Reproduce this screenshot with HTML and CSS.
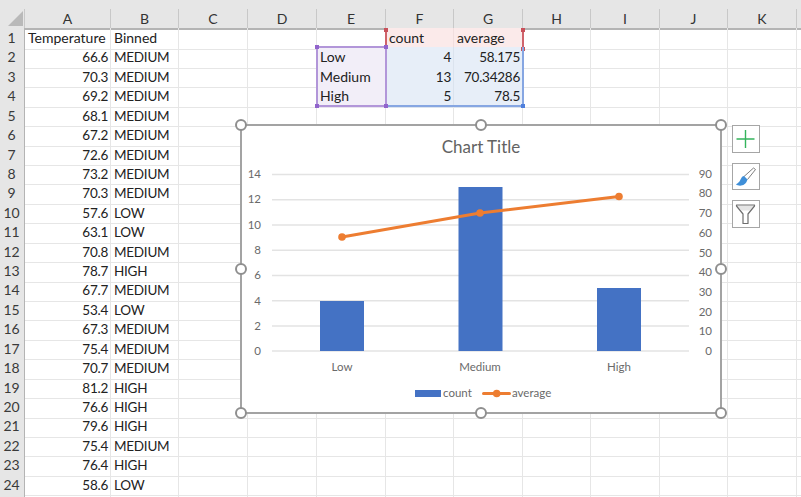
FILE: index.html
```html
<!DOCTYPE html>
<html lang="en">
<head>
<meta charset="utf-8">
<title>Binned temperature chart</title>
<link rel="stylesheet" href="styles.css">
</head>
<body>
<div class="sheet">
  <div class="topband"></div>
  <div class="row head"><div class="corner"><svg class="tri" width="25" height="19" viewBox="0 0 25 19"><path d="M8 17 L23 17 L23 2 Z"/></svg></div><b>A</b><b>B</b><b>C</b><b>D</b><b>E</b><b>F</b><b>G</b><b>H</b><b>I</b><b>J</b><b>K</b><b></b></div>
  <div class="row"><u>1</u><span class="txt">Temperature</span><span class="txt">Binned</span><i></i><i></i><i></i><span class="txt red">count</span><span class="txt red">average</span><i></i><i></i><i></i><i></i><i></i></div>
  <div class="row"><u>2</u><span class="num">66.6</span><span class="cap">MEDIUM</span><i></i><i></i><span class="txt pur">Low</span><span class="num blu">4</span><span class="num blu">58.175</span><i></i><i></i><i></i><i></i><i></i></div>
  <div class="row"><u>3</u><span class="num">70.3</span><span class="cap">MEDIUM</span><i></i><i></i><span class="txt pur">Medium</span><span class="num blu">13</span><span class="num blu">70.34286</span><i></i><i></i><i></i><i></i><i></i></div>
  <div class="row"><u>4</u><span class="num">69.2</span><span class="cap">MEDIUM</span><i></i><i></i><span class="txt pur">High</span><span class="num blu">5</span><span class="num blu">78.5</span><i></i><i></i><i></i><i></i><i></i></div>
  <div class="row"><u>5</u><span class="num">68.1</span><span class="cap">MEDIUM</span><i></i><i></i><i></i><i></i><i></i><i></i><i></i><i></i><i></i><i></i></div>
  <div class="row"><u>6</u><span class="num">67.2</span><span class="cap">MEDIUM</span><i></i><i></i><i></i><i></i><i></i><i></i><i></i><i></i><i></i><i></i></div>
  <div class="row"><u>7</u><span class="num">72.6</span><span class="cap">MEDIUM</span><i></i><i></i><i></i><i></i><i></i><i></i><i></i><i></i><i></i><i></i></div>
  <div class="row"><u>8</u><span class="num">73.2</span><span class="cap">MEDIUM</span><i></i><i></i><i></i><i></i><i></i><i></i><i></i><i></i><i></i><i></i></div>
  <div class="row"><u>9</u><span class="num">70.3</span><span class="cap">MEDIUM</span><i></i><i></i><i></i><i></i><i></i><i></i><i></i><i></i><i></i><i></i></div>
  <div class="row"><u>10</u><span class="num">57.6</span><span class="cap">LOW</span><i></i><i></i><i></i><i></i><i></i><i></i><i></i><i></i><i></i><i></i></div>
  <div class="row"><u>11</u><span class="num">63.1</span><span class="cap">LOW</span><i></i><i></i><i></i><i></i><i></i><i></i><i></i><i></i><i></i><i></i></div>
  <div class="row"><u>12</u><span class="num">70.8</span><span class="cap">MEDIUM</span><i></i><i></i><i></i><i></i><i></i><i></i><i></i><i></i><i></i><i></i></div>
  <div class="row"><u>13</u><span class="num">78.7</span><span class="cap">HIGH</span><i></i><i></i><i></i><i></i><i></i><i></i><i></i><i></i><i></i><i></i></div>
  <div class="row"><u>14</u><span class="num">67.7</span><span class="cap">MEDIUM</span><i></i><i></i><i></i><i></i><i></i><i></i><i></i><i></i><i></i><i></i></div>
  <div class="row"><u>15</u><span class="num">53.4</span><span class="cap">LOW</span><i></i><i></i><i></i><i></i><i></i><i></i><i></i><i></i><i></i><i></i></div>
  <div class="row"><u>16</u><span class="num">67.3</span><span class="cap">MEDIUM</span><i></i><i></i><i></i><i></i><i></i><i></i><i></i><i></i><i></i><i></i></div>
  <div class="row"><u>17</u><span class="num">75.4</span><span class="cap">MEDIUM</span><i></i><i></i><i></i><i></i><i></i><i></i><i></i><i></i><i></i><i></i></div>
  <div class="row"><u>18</u><span class="num">70.7</span><span class="cap">MEDIUM</span><i></i><i></i><i></i><i></i><i></i><i></i><i></i><i></i><i></i><i></i></div>
  <div class="row"><u>19</u><span class="num">81.2</span><span class="cap">HIGH</span><i></i><i></i><i></i><i></i><i></i><i></i><i></i><i></i><i></i><i></i></div>
  <div class="row"><u>20</u><span class="num">76.6</span><span class="cap">HIGH</span><i></i><i></i><i></i><i></i><i></i><i></i><i></i><i></i><i></i><i></i></div>
  <div class="row"><u>21</u><span class="num">79.6</span><span class="cap">HIGH</span><i></i><i></i><i></i><i></i><i></i><i></i><i></i><i></i><i></i><i></i></div>
  <div class="row"><u>22</u><span class="num">75.4</span><span class="cap">MEDIUM</span><i></i><i></i><i></i><i></i><i></i><i></i><i></i><i></i><i></i><i></i></div>
  <div class="row"><u>23</u><span class="num">76.4</span><span class="cap">HIGH</span><i></i><i></i><i></i><i></i><i></i><i></i><i></i><i></i><i></i><i></i></div>
  <div class="row"><u>24</u><span class="num">58.6</span><span class="cap">LOW</span><i></i><i></i><i></i><i></i><i></i><i></i><i></i><i></i><i></i><i></i></div>
  <div class="row"><u></u><i></i><i></i><i></i><i></i><i></i><i></i><i></i><i></i><i></i><i></i><i></i><i></i></div>

  <div class="range r-red"><s class="sq sq-tl"></s><s class="sq sq-tr"></s><s class="sq sq-br"></s></div>
  <div class="range r-blu"><s class="sq sq-br"></s></div>
  <div class="range r-pur"><s class="sq sq-tl"></s><s class="sq sq-tr"></s><s class="sq sq-bl"></s><s class="sq sq-br"></s></div>

  <div class="chart">
    <svg class="plot" width="801" height="497" viewBox="0 0 801 497">
      <g class="grid">
        <path d="M272 174.500H689M272 199.700H689M272 225H689M272 250.300H689M272 275.500H689M272 300.800H689M272 326H689M272 351H689"/>
      </g>
      <g class="bars">
        <rect x="320" y="301" width="44" height="50"/>
        <rect x="458.500" y="187" width="44" height="164"/>
        <rect x="597" y="288" width="44" height="63"/>
      </g>
      <path class="line" d="M342 237 L480 213 L619 196.500"/>
      <circle class="dot" cx="342" cy="237" r="3.800"/>
      <circle class="dot" cx="480" cy="213" r="3.800"/>
      <circle class="dot" cx="619" cy="196.500" r="3.800"/>
      <text class="title" x="481" y="153">Chart Title</text>
      <g class="axl">
        <text x="261" y="178">14</text><text x="261" y="203">12</text><text x="261" y="229">10</text><text x="261" y="254">8</text><text x="261" y="279">6</text><text x="261" y="305">4</text><text x="261" y="330">2</text><text x="261" y="355">0</text>
      </g>
      <g class="axr">
        <text x="712" y="178">90</text><text x="712" y="197">80</text><text x="712" y="217">70</text><text x="712" y="237">60</text><text x="712" y="257">50</text><text x="712" y="276">40</text><text x="712" y="296">30</text><text x="712" y="316">20</text><text x="712" y="335">10</text><text x="712" y="355">0</text>
      </g>
      <g class="cat">
        <text x="342" y="371">Low</text><text x="480" y="371">Medium</text><text x="619" y="371">High</text>
      </g>
      <rect class="leg-b" x="415" y="390" width="26" height="7"/>
      <text class="leg" x="443" y="397">count</text>
      <path class="line" d="M483.500 393.500H509.500"/>
      <circle class="dot" cx="496.700" cy="393.500" r="3.800"/>
      <text class="leg" x="512" y="397">average</text>
    </svg>
    <span class="handle h-tl"></span><span class="handle h-tc"></span><span class="handle h-tr"></span>
    <span class="handle h-ml"></span><span class="handle h-mr"></span>
    <span class="handle h-bl"></span><span class="handle h-bc"></span><span class="handle h-br"></span>
  </div>

  <div class="tools">
    <div class="tool"><svg width="26" height="26" viewBox="0 0 26 26"><path class="ic-plus" d="M12.500 4V22M3.500 13H21.500"/></svg></div>
    <div class="tool"><svg width="26" height="26" viewBox="0 0 26 26"><path class="ic-handle" d="M11 12.500 L20.500 4 L22.500 5.500 L14.500 15.500"/><path class="ic-bristle" d="M11 12 C8 12.500 8 16 6 18 C5 19.300 3.500 20 3 20.500 C6 22.500 12.500 22.500 14.500 15.500 Z"/></svg></div>
    <div class="tool"><svg width="26" height="26" viewBox="0 0 26 26"><path class="ic-fun2" d="M4 4.500H21L16.500 9.500H8.500Z"/><path class="ic-fun" d="M3.500 4H21.500V5L15 13V22.500H10V13L3.500 5Z"/></svg></div>
  </div>
</div>
</body>
</html>
```
FILE: styles.css
```css
* { box-sizing: border-box; }
html, body { margin: 0; padding: 0; background: #fff; }
body { width: 801px; height: 497px; overflow: hidden; }
.sheet {
  position: relative;
  width: 801px;
  height: 497px;
  overflow: hidden;
  font-family: Lato, "Liberation Sans", sans-serif;
  font-size: 14px;
  color: #222;
}
.topband { height: 9px; background: #e6e6e6; }
.row {
  display: grid;
  grid-template-columns: 25px 86px 68px 69px 69px 69px 68px 69px 68px 69px 68px 69px 10px;
  height: 19.43px;
  line-height: 20.5px;
  white-space: nowrap;
}
.row > * {
  border-right: 1px solid #e6e6e6;
  border-bottom: 1px solid #e6e6e6;
  min-width: 0;
  text-decoration: none;
  font-style: normal;
}
.head { height: 19px; background: #e6e6e6; }
.head > * {
  font-weight: 400;
  text-align: center;
  border-right: 1px solid #c8c8c8;
  border-bottom: 2px solid #b4b4b4;
  color: #333;
  line-height: 19px;
}
.corner { overflow: hidden; }
.tri { display: block; }
.tri path { fill: #b9b9b9; }
.row > u {
  background: #e6e6e6;
  text-align: center;
  color: #3a3a3a;
  border-right: 1px solid #b4b4b4;
  border-bottom: 1px solid #cfcfcf;
  padding-right: 1px;
}
.txt { padding-left: 3px; }
.cap { padding-left: 3px; font-size: 13.500px; letter-spacing: -0.25px; }
.num { text-align: right; padding-right: 2px; font-size: 13.500px; letter-spacing: -0.25px; }
.red { background: #fbeaea; border-color: #f1dede !important; }
.blu { background: #e7eef8; border-color: #dbe3ee !important; }
.pur { background: #f2eef8; border-color: #e8e3ee !important; }

.range { position: absolute; pointer-events: none; }
.r-red { left: 385px; top: 28px; width: 139px; height: 20px; border: solid #d0636b; border-width: 0 2px; color: #c8505a; }
.r-blu { left: 385px; top: 47px; width: 139px; height: 60px; border: 2px solid #86a6e2; border-top: 0; border-left: 0; color: #4f7fdc; }
.r-pur { left: 316px; top: 46px; width: 71px; height: 61px; border: 2px solid #b296d9; color: #9164cc; }
.sq {
  position: absolute;
  width: 4px;
  height: 4px;
  background: currentColor;
  text-decoration: none;
}
.sq-tl { left: -3px; top: -3px; }
.sq-tr { right: -3px; top: -3px; }
.sq-bl { left: -3px; bottom: -3px; }
.sq-br { right: -3px; bottom: -3px; }
.r-red .sq-tl, .r-red .sq-tr { top: 0; }

.chart {
  position: absolute;
  left: 240px;
  top: 124px;
  width: 482px;
  height: 290px;
  background: #fff;
  border: 2px solid #a3a3a3;
}
.plot { position: absolute; left: -242px; top: -126px; }
.grid path { stroke: #e3e3e3; stroke-width: 1.500; fill: none; }
.bars rect { fill: #4472c4; }
.line { stroke: #ed7d31; stroke-width: 3; fill: none; stroke-linecap: round; }
.dot { fill: #ed7d31; }
.plot text { font-family: Lato, "Liberation Sans", sans-serif; fill: #6a6a6a; font-size: 11.500px; }
.plot .title { font-size: 17px; text-anchor: middle; fill: #636363; }
.axl text, .axr text { text-anchor: end; }
.cat text { text-anchor: middle; }
.leg-b { fill: #4472c4; }
.handle {
  position: absolute;
  width: 12px;
  height: 12px;
  border-radius: 50%;
  border: 2px solid #8f8f8f;
  background: #fff;
}
.h-tl { left: -7px; top: -7px; }
.h-tc { left: 233px; top: -7px; }
.h-tr { left: 473px; top: -7px; }
.h-ml { left: -7px; top: 137px; }
.h-mr { left: 473px; top: 137px; }
.h-bl { left: -7px; top: 281px; }
.h-bc { left: 233px; top: 281px; }
.h-br { left: 473px; top: 281px; }

.tools {
  position: absolute;
  left: 732px;
  top: 125px;
  display: flex;
  flex-direction: column;
  gap: 10px;
}
.tool {
  width: 28px;
  height: 27.500px;
  background: #fff;
  border: 1px solid #a6a6a6;
}
.tool svg { display: block; }
.ic-plus { stroke: #34b45c; stroke-width: 1.400; fill: none; }
.ic-handle { fill: #fff; stroke: #7f7f7f; stroke-width: 1; }
.ic-bristle { fill: #3f8fd8; }
.ic-fun { fill: none; stroke: #6e6e6e; stroke-width: 1.200; stroke-linejoin: round; }
.ic-fun2 { fill: #e4e4e4; }
```
